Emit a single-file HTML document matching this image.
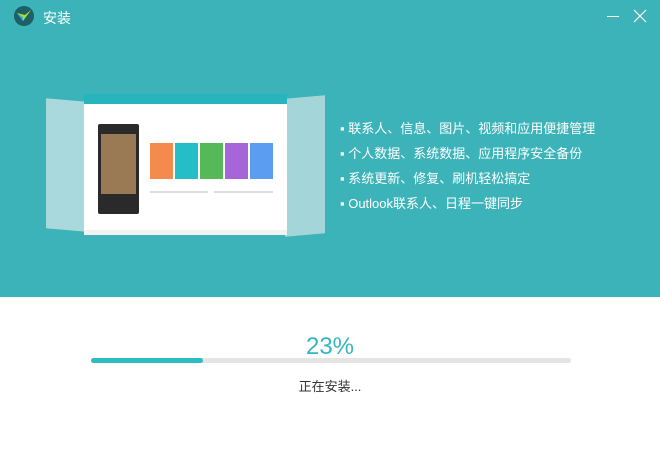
<!DOCTYPE html>
<html><head><meta charset="utf-8"><style>
*{margin:0;padding:0;box-sizing:border-box}
body{width:660px;height:453px;overflow:hidden;background:#fff;font-family:"Liberation Sans","Noto Sans CJK SC",sans-serif;position:relative}
.top{position:absolute;left:0;top:0;width:660px;height:297px;background:#3bb3b9}
.title{position:absolute;left:43px;top:8px;color:#fff;font-size:14px}
.feat{position:absolute;left:340px;color:#fff;font-size:13px;line-height:25px;top:116px}
.pct{position:absolute;left:0;width:660px;text-align:center;top:333px;font-size:24px;color:#35b6c0}
.bar{position:absolute;left:91px;top:358px;width:480px;height:5px;background:#e4e4e4;border-radius:3px}
.fill{position:absolute;left:0;top:0;width:112px;height:5px;background:#2ebcc4;border-radius:3px}
.st{position:absolute;left:0;width:660px;text-align:center;top:376px;font-size:13px;color:#333}
.side{position:absolute;background:#a9d9dc}
.win{position:absolute;left:84px;top:94px;width:203px;height:141px;background:#fff}
</style></head><body>
<div class="top">
<svg style="position:absolute;left:13px;top:5px" width="22" height="22" viewBox="0 0 22 22"><circle cx="11" cy="11" r="10" fill="#1f5f66"/><path d="M4 8 L10 16 L18 5 L12 10 Z" fill="#a8e22b"/><path d="M4 8 L10 12 L10 16Z" fill="#2fb2e8"/></svg>
<div class="title">安装</div>
<div style="position:absolute;left:607px;top:16px;width:12px;height:1px;background:#fff"></div>
<svg style="position:absolute;left:633px;top:9px" width="14" height="14"><path d="M1 1L13 13M13 1L1 13" stroke="#fff" stroke-width="1.2"/></svg>
<div class="side" style="left:46px;top:100px;width:40px;height:130px;transform:skewY(5deg)"></div>
<div class="side" style="left:285px;top:97px;width:40px;height:138px;background:#a4d6d9;transform:skewY(-5deg)"></div>
<div class="win">
<div style="height:10px;background:#28b4bd"></div>
<div style="position:absolute;left:14px;top:30px;width:41px;height:90px;background:#2a2a2a;border-radius:2px"></div>
<div style="position:absolute;left:17px;top:40px;width:35px;height:60px;background:#9a7a55"></div>
<div style="position:absolute;left:66px;top:49px;width:23px;height:36px;background:#f48a4c"></div>
<div style="position:absolute;left:91px;top:49px;width:23px;height:36px;background:#25bec7"></div>
<div style="position:absolute;left:116px;top:49px;width:23px;height:36px;background:#55b95a"></div>
<div style="position:absolute;left:141px;top:49px;width:23px;height:36px;background:#a666d9"></div>
<div style="position:absolute;left:166px;top:49px;width:23px;height:36px;background:#5b9df0"></div>
<div style="position:absolute;left:66px;top:97px;width:58px;height:2px;background:#ddd"></div>
<div style="position:absolute;left:130px;top:97px;width:59px;height:2px;background:#ddd"></div>
<div style="position:absolute;left:0;top:136px;width:203px;height:5px;background:#f2f2f2"></div>
</div>
<div class="feat">▪ 联系人、信息、图片、视频和应用便捷管理<br>▪ 个人数据、系统数据、应用程序安全备份<br>▪ 系统更新、修复、刷机轻松搞定<br>▪ Outlook联系人、日程一键同步</div>
</div>
<div class="pct">23%</div>
<div class="bar"><div class="fill"></div></div>
<div class="st">正在安装...</div>
</body></html>
